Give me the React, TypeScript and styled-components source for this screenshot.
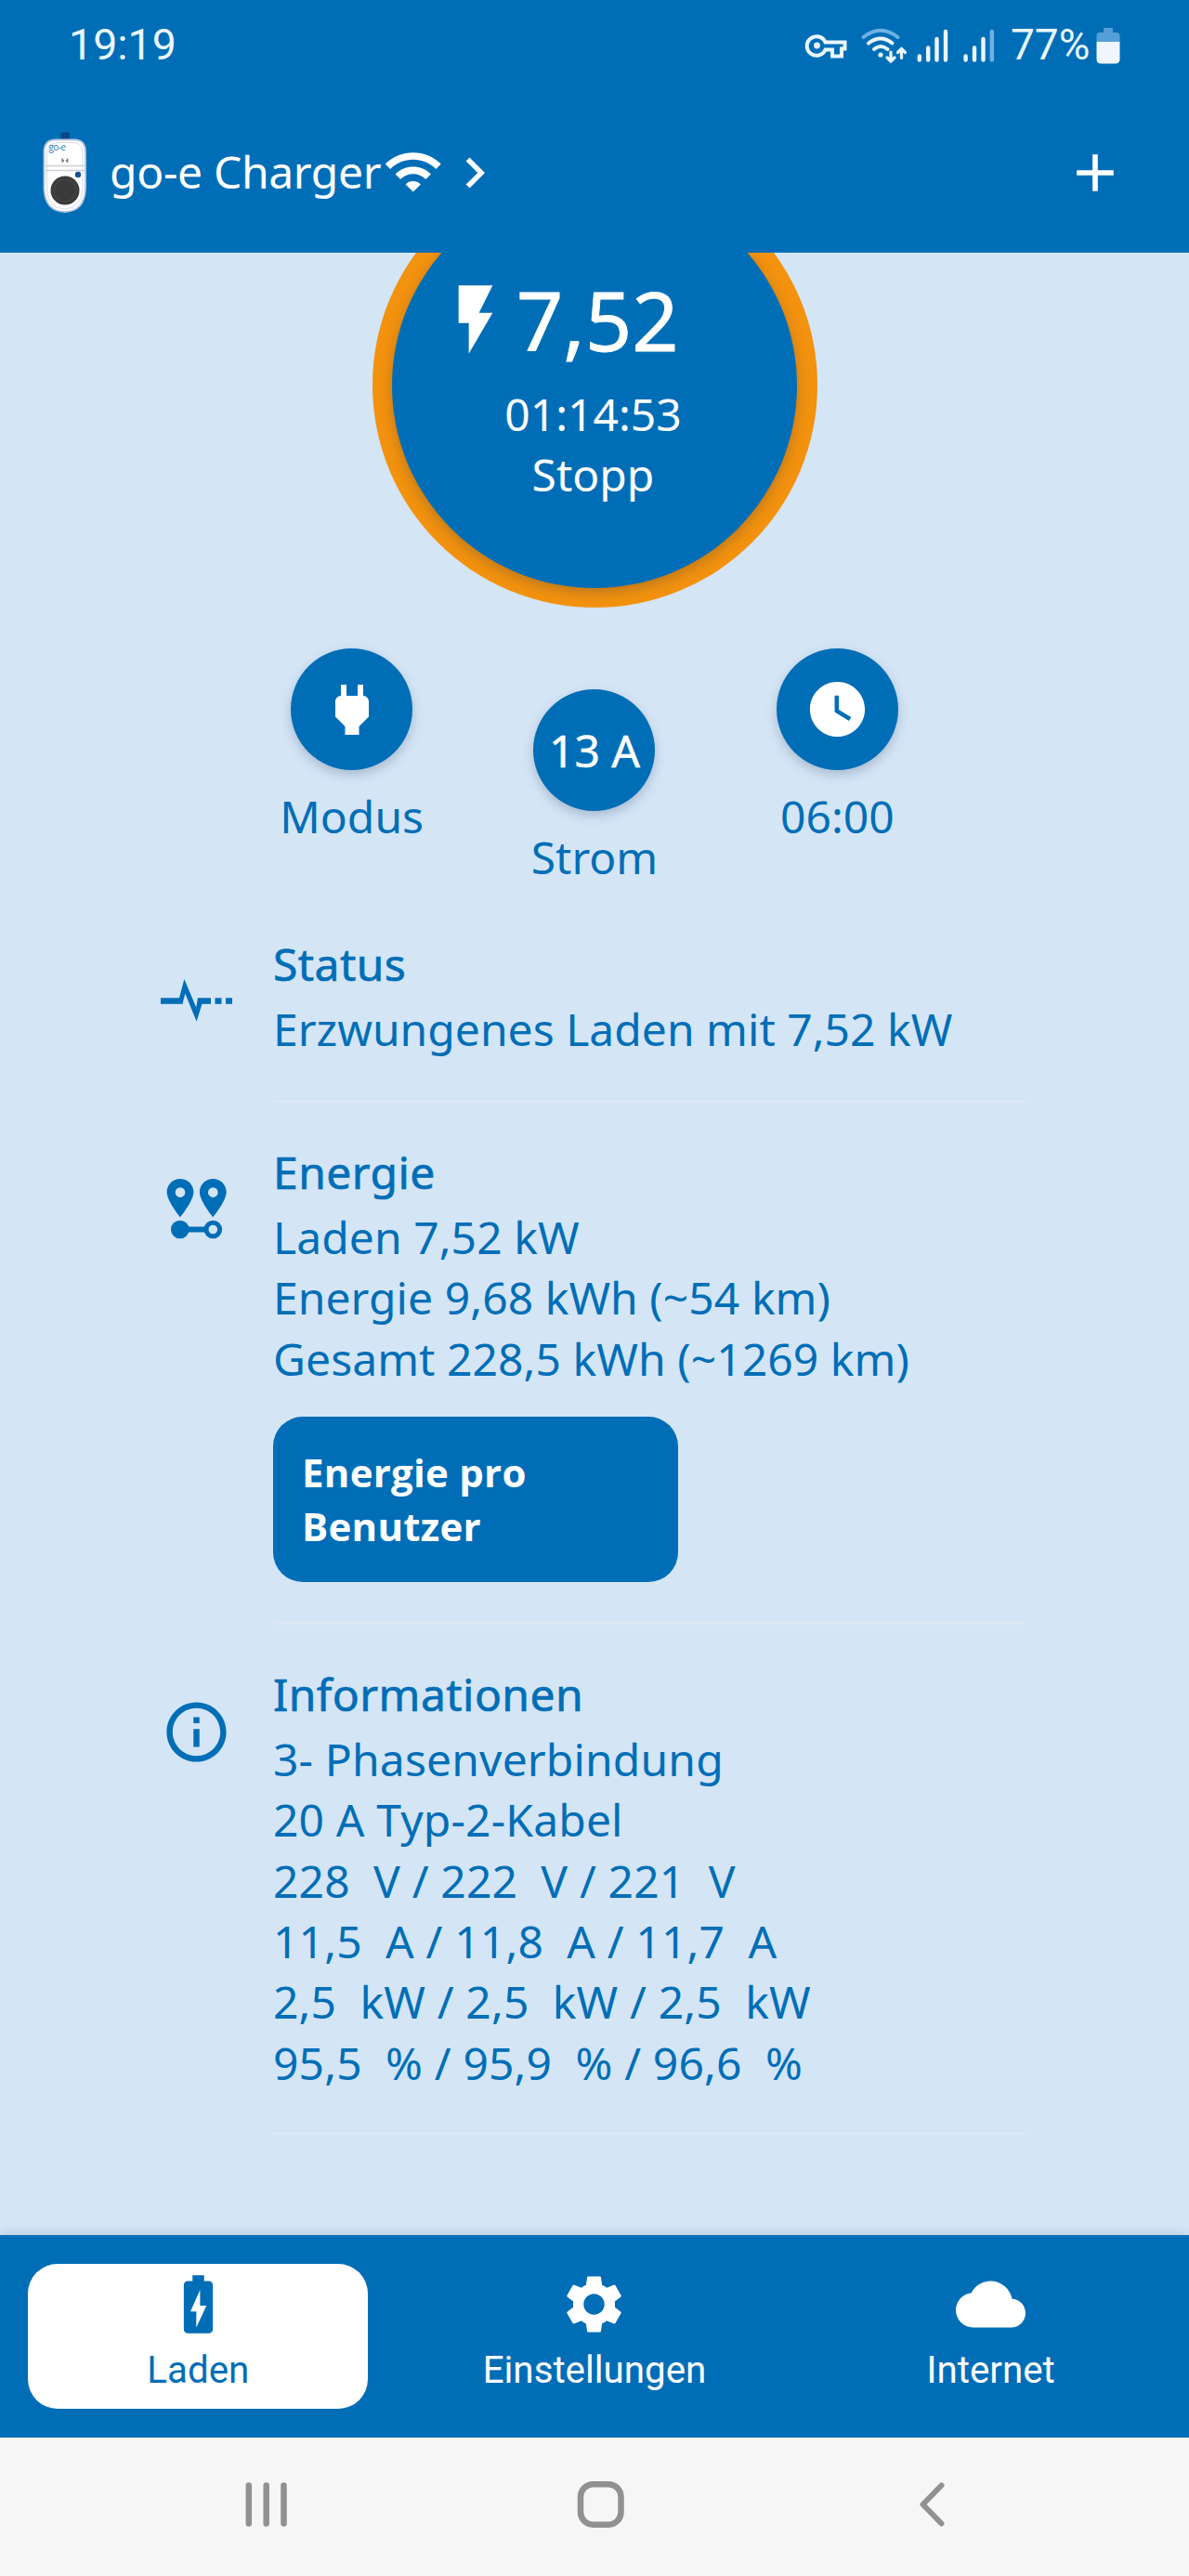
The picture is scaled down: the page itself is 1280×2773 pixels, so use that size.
import React from "react";
import styled, { createGlobalStyle } from "styled-components";

const BLUE = "#006eb7";
const SKY = "#d4e5f6";

const GlobalStyle = createGlobalStyle`
  *, *::before, *::after { box-sizing: border-box; }
  body { margin: 0; background: ${SKY}; }
  svg { display: block; flex: none; }
`;

const Screen = styled.div`
  width: 1280px;
  height: 2773px;
  display: flex;
  flex-direction: column;
  overflow: hidden;
  background: ${SKY};
  color: ${BLUE};
  font-family: "Noto Sans", "Open Sans", sans-serif;
  font-size: 48px;
  line-height: 65.33px;
`;

const StatusBar = styled.div`
  flex: none;
  height: 98px;
  padding: 0 73px 0 74px;
  display: flex;
  justify-content: space-between;
  background: ${BLUE};
  color: #eaf7ff;
  font-family: Roboto, sans-serif;
  font-size: 46.5px;
  line-height: 96px;
`;

const StatusIcons = styled.div`
  display: flex;
  align-items: flex-start;
`;

const BatteryText = styled.span<{ $w: number }>`
  width: ${(p) => p.$w}px;
  font-size: 46px;
  padding-left: 1px;
  white-space: nowrap;
`;

const Header = styled.header`
  flex: none;
  height: 174px;
  padding: 0 67px 0 46px;
  display: flex;
  align-items: flex-start;
  background: ${BLUE};
  color: #fff;
`;

const DeviceName = styled.span`
  width: 296px;
  margin-left: 24px;
  padding-top: 54px;
  letter-spacing: -0.33px;
  white-space: nowrap;
`;

const HeaderIcon = styled.span<{ $left?: string; $top?: number }>`
  margin-left: ${(p) => p.$left ?? "0"};
  margin-top: ${(p) => p.$top ?? 55}px;
`;

const Content = styled.main`
  flex: none;
  height: 2134px;
  display: flex;
  flex-direction: column;
  align-items: center;
  overflow: hidden;
`;

const Ring = styled.div`
  flex: none;
  width: 479px;
  height: 479px;
  margin-top: -97px;
  padding: 21.5px;
  border-radius: 50%;
  background: #f3920e;
`;

const ChargeButton = styled.button`
  width: 436px;
  height: 436px;
  padding: 87px 3px 0 0;
  border: 0;
  border-radius: 50%;
  display: flex;
  flex-direction: column;
  align-items: center;
  background: ${BLUE};
  box-shadow: 0 5px 14px rgba(60, 60, 60, 0.3);
  color: #fff;
  font: inherit;
`;

const PowerLine = styled.span`
  display: flex;
  align-items: center;
  width: 343px;
  height: 120px;
  margin: 0 0 9px 2px;
  font-size: 88px;
  line-height: 120px;
  -webkit-text-stroke: 0.8px currentColor;
`;

const Controls = styled.section`
  display: grid;
  grid-template-columns: repeat(3, 261.33px);
  margin-top: 44px;
  height: 257px;
`;

const Control = styled.div<{ $drop?: boolean }>`
  display: flex;
  flex-direction: column;
  align-items: center;
  gap: 17px;
  padding-top: ${(p) => (p.$drop ? 44 : 0)}px;
`;

const RoundButton = styled.button`
  width: 131px;
  height: 131px;
  padding: 0;
  border: 0;
  border-radius: 50%;
  display: flex;
  align-items: center;
  justify-content: center;
  background: ${BLUE};
  box-shadow: 0 5px 12px rgba(70, 90, 120, 0.3);
  color: #fff;
  font: inherit;
`;

const Reading = styled.span`
  -webkit-text-stroke: 0.5px currentColor;
`;

const List = styled.section`
  width: 932.5px;
  margin-top: 49.5px;
  display: flex;
  flex-direction: column;
  align-self: flex-start;
  margin-left: 173px;
`;

const Item = styled.article`
  display: grid;
  grid-template-columns: 77px 812px;
  column-gap: 44px;
  margin-bottom: 42px;
`;

const ItemIcon = styled.div`
  padding-top: 34.5px;
`;

const ItemBody = styled.div<{ $pad: number; $tracking: number }>`
  padding-bottom: ${(p) => p.$pad}px;
  border-bottom: 3px solid #dce7f3;
  letter-spacing: ${(p) => p.$tracking}px;
`;

const Title = styled.h2`
  margin: 0 0 4.7px;
  font: inherit;
  letter-spacing: 0.45px;
  -webkit-text-stroke: 0.65px currentColor;
`;

const Line = styled.p`
  margin: 0;
  white-space: pre;
`;

const EnergyButton = styled.button`
  width: 436px;
  height: 177.5px;
  margin-top: 30.3px;
  padding: 0 110px 0 31px;
  border: 0;
  border-radius: 32px;
  display: flex;
  align-items: center;
  background: ${BLUE};
  color: #fff;
  font: 700 42px/58.3px "Open Sans", sans-serif;
  letter-spacing: 0.25px;
  text-align: left;
`;

const TabBar = styled.nav`
  flex: none;
  height: 218px;
  padding: 31px 0;
  display: grid;
  grid-template-columns: repeat(3, 1fr);
  justify-items: center;
  background: ${BLUE};
  box-shadow: 0 -2px 10px rgba(0, 60, 100, 0.14);
`;

const Tab = styled.button<{ $active?: boolean }>`
  width: 366px;
  height: 156px;
  padding: 6px 0 0;
  border: 0;
  border-radius: 32px;
  display: flex;
  flex-direction: column;
  align-items: center;
  background: ${(p) => (p.$active ? "#fff" : "transparent")};
  color: ${(p) => (p.$active ? BLUE : "#fff")};
  font-family: Roboto, sans-serif;
  font-size: 40.3px;
  line-height: 47px;
  gap: 10px;
`;

const SystemNav = styled.footer`
  flex: none;
  height: 149px;
  display: flex;
  align-items: center;
  justify-content: space-between;
  padding: 0 258px 5px 260px;
  background: #f6f6f6;
`;

const HomeKey = styled.span`
  margin-left: -10px;
`;

const Glyph = ({ d, size }: { d: string; size: number }) => (
  <svg width={size} height={size} viewBox="0 0 24 24" fill="currentColor">
    <path d={d} />
  </svg>
);

const paths = {
  wifi: "M1 9l2 2c4.97-4.97 13.03-4.97 18 0l2-2C16.93 2.93 7.08 2.93 1 9zm8 8l3 3 3-3c-1.65-1.66-4.34-1.66-6 0zm-4-4l2 2c2.76-2.76 7.24-2.76 10 0l2-2C15.14 9.14 8.87 9.14 5 13z",
  chevron: "M10 6L8.59 7.41 13.17 12l-4.58 4.59L10 18l6-6z",
  add: "M19 13h-6v6h-2v-6H5v-2h6V5h2v6h6v2z",
  bolt: "M7 2v11h3v9l7-12h-4l4-8z",
  plug: "M16.01 7L16 3h-2v4h-4V3H8v4h-.01C7 6.99 6 7.99 6 8.99v5.49L9.5 18v3h5v-3l3.5-3.51v-5.5c0-1-1-2-1.99-1.99z",
  clock: "M12 2C6.5 2 2 6.5 2 12s4.5 10 10 10 10-4.5 10-10S17.5 2 12 2zm4.2 14.2L11 13V7h1.5v5.2l4.5 2.7-.8 1.3z",
  info: "M11 7h2v2h-2zm0 4h2v6h-2zm1-9C6.48 2 2 6.48 2 12s4.48 10 10 10 10-4.48 10-10S17.52 2 12 2zm0 18c-4.41 0-8-3.59-8-8s3.59-8 8-8 8 3.59 8 8-3.59 8-8 8z",
  battery: "M15.67 4H14V2h-4v2H8.33C7.6 4 7 4.6 7 5.33v15.33C7 21.4 7.6 22 8.33 22h7.33c.74 0 1.34-.6 1.34-1.33V5.33C17 4.6 16.4 4 15.67 4zM11.3 20v-5.5h-2L12.6 7v5.5h2.200L11.3 20z",
  gear: "M19.14 12.94c.04-.3.06-.61.06-.94 0-.32-.02-.64-.07-.94l2.03-1.58c.18-.14.23-.41.12-.61l-1.92-3.32c-.12-.22-.37-.29-.59-.22l-2.39.96c-.5-.38-1.03-.7-1.62-.94l-.36-2.54c-.04-.24-.24-.41-.48-.41h-3.84c-.24 0-.43.17-.47.41l-.36 2.54c-.59.24-1.13.57-1.62.94l-2.39-.96c-.22-.08-.47 0-.59.22L2.74 8.87c-.12.21-.08.47.12.61l2.03 1.58c-.05.3-.09.63-.09.94s.02.64.07.94l-2.03 1.58c-.18.14-.23.41-.12.61l1.92 3.32c.12.22.37.29.59.22l2.39-.96c.5.38 1.03.7 1.62.94l.36 2.54c.05.24.24.41.48.41h3.84c.24 0 .44-.17.47-.41l.36-2.54c.59-.24 1.13-.56 1.62-.94l2.39.96c.22.08.47 0 .59-.22l1.92-3.32c.12-.22.07-.47-.12-.61l-2.01-1.58zM12 15.6c-1.98 0-3.6-1.62-3.6-3.6s1.62-3.6 3.6-3.6 3.6 1.62 3.6 3.6-1.62 3.6-3.6 3.6z",
  cloud: "M19.35 10.04C18.67 6.59 15.64 4 12 4 9.11 4 6.6 5.64 5.35 8.04 2.34 8.36 0 10.91 0 14c0 3.31 2.69 6 6 6h13c2.76 0 5-2.24 5-5 0-2.64-2.05-4.78-4.65-4.96z",
};

const SignalGlyphs = () => (
  <svg width="222" height="97" viewBox="865 0 222 97" fill="none" stroke="#eaf7ff" strokeLinecap="round">
    <path d="M888.5 45.5H909.5V52.5H906V60.5H896V53.5H888.5A10.3 10.3 0 1 1 888.5 45.5Z" strokeWidth="4" strokeLinejoin="miter" />
    <circle cx="879.5" cy="49" r="3.4" fill="#eaf7ff" stroke="none" />
    <path d="M929.5 40Q948 25.500 966.500 40" stroke="#6db2e3" strokeWidth="4" />
    <g strokeWidth="4">
      <path d="M935 46.500Q948 36.500 960.500 46.500" />
      <path d="M941 53Q948 47 955.500 53" />
      <path d="M959 56V65.500M955 62L959 66L963 62M970.500 62.500V53M966.500 56.500L970.500 52.500L974.500 56.500" strokeWidth="3.200" />
    </g>
    <circle cx="948" cy="59" r="2.600" fill="#eaf7ff" stroke="none" />
    <g strokeWidth="4.400">
      <path d="M989.800 60.500V64.500M999.200 51.500V64.500M1008.500 42V64.500M1018 34V64.500" />
      <path d="M1039.600 60.500V64.500M1049 51.500V64.500M1058.500 42V64.500" />
      <path d="M1067.800 34V64.500" stroke="#6db2e3" />
    </g>
  </svg>
);

const BatteryGlyph = () => (
  <svg width="27" height="97" viewBox="1180 0 27 97">
    <path d="M1188 30H1198V35H1202Q1205.500 35 1205.500 39V45H1180.500V39Q1180.500 35 1184 35H1188Z" fill="#559fd8" />
    <path d="M1180.500 45H1205.500V63.500Q1205.500 68.500 1200.500 68.500H1185.500Q1180.500 68.500 1180.500 63.500Z" fill="#f0f6ff" />
  </svg>
);

const LogoText = styled.text`
  font-family: "Open Sans", sans-serif;
  font-size: 10px;
  letter-spacing: -0.6px;
`;

const ChargerPicture = () => (
  <svg width="48" height="174" viewBox="46 98 48 174">
    <rect x="65.500" y="142.500" width="9.500" height="10" rx="1" fill="#0c4583" />
    <path d="M47.500 164Q47.500 150.500 60 150.500H80Q92 150.500 92 164V203Q91 227.500 69.800 228Q48.500 227.500 47.500 203Z" fill="#fff" stroke="#b9c9df" strokeWidth="1.800" />
    <path d="M50.500 165Q50.500 153.500 61 153.500H79Q89 153.500 89 165V203Q88 224.500 69.800 225Q51.500 224.500 50.500 203Z" fill="none" stroke="#d7dde6" strokeWidth="1" />
    <path d="M49 178.500H91M49 183.500H91" stroke="#c9ced6" strokeWidth="1.300" />
    <LogoText x="52.500" y="161.500" fill="#2b7fc0">go-e</LogoText>
    <path d="M67 170.500V175M72.800 170.500V175M67 171.500L69 172.800L67 174M72.800 171.500L70.800 172.800L72.800 174" stroke="#666" strokeWidth="1" fill="none" />
    <circle cx="84" cy="188" r="3.200" fill="#1c4f96" />
    <circle cx="70" cy="205" r="15.500" fill="#3a3a3a" />
    <circle cx="70" cy="205" r="12" fill="none" stroke="#4a4a4a" strokeWidth="1" />
  </svg>
);

const PulseGlyph = () => (
  <svg width="77" height="77" viewBox="173 1038.500 77 77" fill={BLUE}>
    <path d="M173 1073.800H193L198.400 1053.500L211.200 1084L213 1073.800H227V1080.200H217.500L211.600 1099L199.300 1069L196.500 1080.200H173Z" />
    <path d="M231.500 1073.800H238.500V1080.200H231.500ZM243 1073.800H250V1080.200H243Z" />
  </svg>
);

const TripGlyph = () => (
  <svg width="77" height="77" viewBox="173 1263.500 77 77" fill={BLUE}>
    <path fillRule="evenodd" d="M194 1269.500c-8 0-14.400 6.300-14.400 14.300 0 9.500 14.400 27 14.400 27s14.400-17.500 14.400-27c0-8-6.400-14.300-14.400-14.300zm0 9.300a5.300 5.300 0 1 1 0 10.600a5.300 5.300 0 1 1 0-10.600z" />
    <path fillRule="evenodd" d="M229.300 1269.500c-8 0-14.400 6.300-14.400 14.300 0 9.500 14.400 27 14.400 27s14.400-17.500 14.400-27c0-8-6.400-14.300-14.400-14.300zm0 9.300a5.300 5.300 0 1 1 0 10.600a5.300 5.300 0 1 1 0-10.600z" />
    <circle cx="193.800" cy="1324" r="9.800" />
    <path d="M194 1321H222V1327H194Z" />
    <circle cx="229.300" cy="1324" r="7.300" fill="none" stroke={BLUE} strokeWidth="5" />
  </svg>
);

const items = [
  {
    title: "Status",
    icon: <PulseGlyph />,
    pad: 44,
    tracking: 0.02,
    lines: ["Erzwungenes Laden mit 7,52 kW"],
  },
  {
    title: "Energie",
    icon: <TripGlyph />,
    pad: 43.5,
    tracking: 0.06,
    lines: ["Laden 7,52 kW", "Energie 9,68 kWh (~54 km)", "Gesamt 228,5 kWh (~1269 km)"],
    action: "Energie pro Benutzer",
  },
  {
    title: "Informationen",
    icon: <Glyph d={paths.info} size={77} />,
    pad: 42,
    tracking: 0.15,
    lines: [
      "3- Phasenverbindung",
      "20 A Typ-2-Kabel",
      "228  V / 222  V / 221  V",
      "11,5  A / 11,8  A / 11,7  A",
      "2,5  kW / 2,5  kW / 2,5  kW",
      "95,5  % / 95,9  % / 96,6  %",
    ],
  },
];

export default function App() {
  return (
    <Screen>
      <GlobalStyle />
      <StatusBar>
        <span>19:19</span>
        <StatusIcons>
          <SignalGlyphs />
          <BatteryText $w={93}>77%</BatteryText>
          <BatteryGlyph />
        </StatusIcons>
      </StatusBar>
      <Header>
        <ChargerPicture />
        <DeviceName>go-e Charger</DeviceName>
        <HeaderIcon $left="-2px" $top={54}>
          <Glyph d={paths.wifi} size={65.5} />
        </HeaderIcon>
        <HeaderIcon $left="0px">
          <Glyph d={paths.chevron} size={66} />
        </HeaderIcon>
        <HeaderIcon $left="auto" $top={54}>
          <Glyph d={paths.add} size={68} />
        </HeaderIcon>
      </Header>
      <Content>
        <Ring>
          <ChargeButton>
            <PowerLine>
              <Glyph d={paths.bolt} size={88} />
              <span>7,52</span>
            </PowerLine>
            <span>01:14:53</span>
            <span>Stopp</span>
          </ChargeButton>
        </Ring>
        <Controls>
          <Control>
            <RoundButton><Glyph d={paths.plug} size={72} /></RoundButton>
            <span>Modus</span>
          </Control>
          <Control $drop>
            <RoundButton><Reading>13 A</Reading></RoundButton>
            <span>Strom</span>
          </Control>
          <Control>
            <RoundButton><Glyph d={paths.clock} size={71} /></RoundButton>
            <span>06:00</span>
          </Control>
        </Controls>
        <List>
          {items.map((item) => (
            <Item key={item.title}>
              <ItemIcon>{item.icon}</ItemIcon>
              <ItemBody $pad={item.pad} $tracking={item.tracking}>
                <Title>{item.title}</Title>
                {item.lines.map((line) => (
                  <Line key={line}>{line}</Line>
                ))}
                {item.action && <EnergyButton>{item.action}</EnergyButton>}
              </ItemBody>
            </Item>
          ))}
        </List>
      </Content>
      <TabBar>
        <Tab $active>
          <Glyph d={paths.battery} size={75} />
          Laden
        </Tab>
        <Tab>
          <Glyph d={paths.gear} size={75} />
          Einstellungen
        </Tab>
        <Tab>
          <Glyph d={paths.cloud} size={75} />
          Internet
        </Tab>
      </TabBar>
      <SystemNav>
        <svg width="53" height="56" viewBox="0 0 53 56" stroke="#919191" strokeWidth="6.500" strokeLinecap="round">
          <path d="M7.800 7.500V48.500M26.700 7.500V48.500M45.500 7.500V48.500" />
        </svg>
        <HomeKey>
          <svg width="56" height="56" viewBox="0 0 56 56" fill="none" stroke="#919191" strokeWidth="6.500">
            <rect x="6" y="6.200" width="43.500" height="43.500" rx="13.500" />
          </svg>
        </HomeKey>
        <svg width="32" height="56" viewBox="0 0 32 56" fill="none" stroke="#919191" strokeWidth="6" strokeLinecap="round" strokeLinejoin="round">
          <path d="M23.500 7.500L3.500 28L23.500 48.500" />
        </svg>
      </SystemNav>
    </Screen>
  );
}
